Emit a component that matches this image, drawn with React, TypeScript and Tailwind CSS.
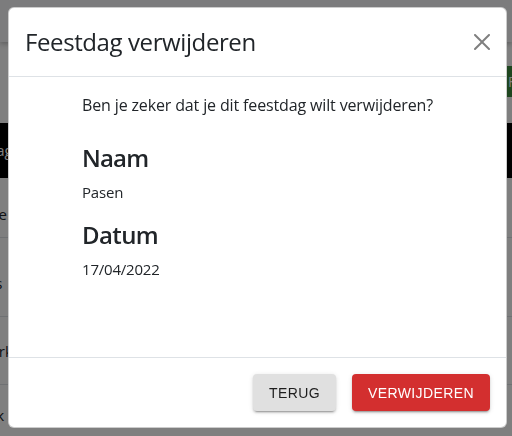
import React from 'react';

function CloseIcon() {
  return (
    <svg viewBox="0 0 16 16" className="w-4 h-4" fill="#000" fillOpacity={0.5}>
      <path d="M.293.293a1 1 0 0 1 1.414 0L8 6.586 14.293.293a1 1 0 1 1 1.414 1.414L9.414 8l6.293 6.293a1 1 0 0 1-1.414 1.414L8 9.414l-6.293 6.293a1 1 0 0 1-1.414-1.414L6.586 8 .293 1.707a1 1 0 0 1 0-1.414z" />
    </svg>
  );
}

function BackgroundPage() {
  return (
    <div className="w-[512px] h-[436px] overflow-hidden bg-white text-[#212529] font-['Open_Sans',sans-serif]">
      <div className="h-[42px] bg-[#f8f9fa] shadow-[0_2px_5px_rgba(0,0,0,0.25)]"></div>
      <div className="h-[81px] flex justify-end items-start pt-[24px]">
        <div className="h-[31px] w-[90px] -mr-[84px] bg-[#3c8c3f] text-white text-sm flex items-center pl-[2px]">
          FEESTDAG
        </div>
      </div>
      <div className="h-[55px] bg-black text-white text-[15px] flex items-center">
        <span className="-ml-[50px]">Feestdag</span>
      </div>
      <div className="h-[60px] border-b border-[#dee2e6] flex items-center pt-[14px] text-[15px]">
        <span className="-ml-[26px]">Pase</span>
      </div>
      <div className="h-[79px] border-b border-[#dee2e6] flex items-center pt-[12px] text-[15px]">
        <span className="-ml-[22px]">Pas</span>
      </div>
      <div className="h-[68px] border-b border-[#dee2e6] flex items-center pt-[2px] text-[15px]">
        <span className="-ml-[52px]">Pinksterk</span>
      </div>
      <div className="h-[60px] flex items-center text-[15px]">
        <span className="-ml-[40px]">Kerstk</span>
      </div>
    </div>
  );
}

export default function App() {
  return (
    <div className="relative w-[512px] h-[436px] overflow-hidden">
      <BackgroundPage />
      <div className="fixed inset-0 bg-black/50 pl-2 pt-[7px]">
        <div className="w-[499px] h-[421px] flex flex-col bg-white border border-black/20 rounded-[6px] text-[#212529] font-['Open_Sans',sans-serif]">
          <div className="flex items-center justify-between px-4 py-4 border-b border-[#dee2e6]">
            <h4 className="text-2xl leading-[36px] tracking-[-0.4px]">Feestdag verwijderen</h4>
            <button className="w-4 h-4 flex items-center justify-center">
              <CloseIcon />
            </button>
          </div>
          <div className="flex-1 p-4">
            <div className="w-fit mx-auto">
              <p className="text-base leading-6 tracking-[-0.14px] mb-[27px]">Ben je zeker dat je dit feestdag wilt verwijderen?</p>
              <h3 className="text-2xl font-semibold leading-[1.2] tracking-[-0.8px] mb-2">Naam</h3>
              <p className="text-[15px] leading-[22px] tracking-[-0.2px] mb-[18px]">Pasen</p>
              <h3 className="text-2xl font-semibold leading-[1.2] tracking-[-0.6px] mb-2">Datum</h3>
              <p className="text-[15px] leading-[22px] tracking-[-0.2px]">17/04/2022</p>
            </div>
          </div>
          <div className="flex justify-end items-center gap-4 px-4 py-4 border-t border-[#dee2e6]">
            <button className="h-[37px] px-4 rounded-[4px] bg-[#e0e0e0] text-black/[0.87] text-sm tracking-[0.4px] uppercase font-['Liberation_Sans',Arial,sans-serif] shadow-[0_3px_1px_-2px_rgba(0,0,0,0.2),0_2px_2px_0_rgba(0,0,0,0.14),0_1px_5px_0_rgba(0,0,0,0.12)]">
              Terug
            </button>
            <button className="h-[37px] px-4 rounded-[4px] bg-[#d32f2f] text-white text-sm tracking-[0.4px] uppercase font-['Liberation_Sans',Arial,sans-serif] shadow-[0_3px_1px_-2px_rgba(0,0,0,0.2),0_2px_2px_0_rgba(0,0,0,0.14),0_1px_5px_0_rgba(0,0,0,0.12)]">
              Verwijderen
            </button>
          </div>
        </div>
      </div>
    </div>
  );
}
